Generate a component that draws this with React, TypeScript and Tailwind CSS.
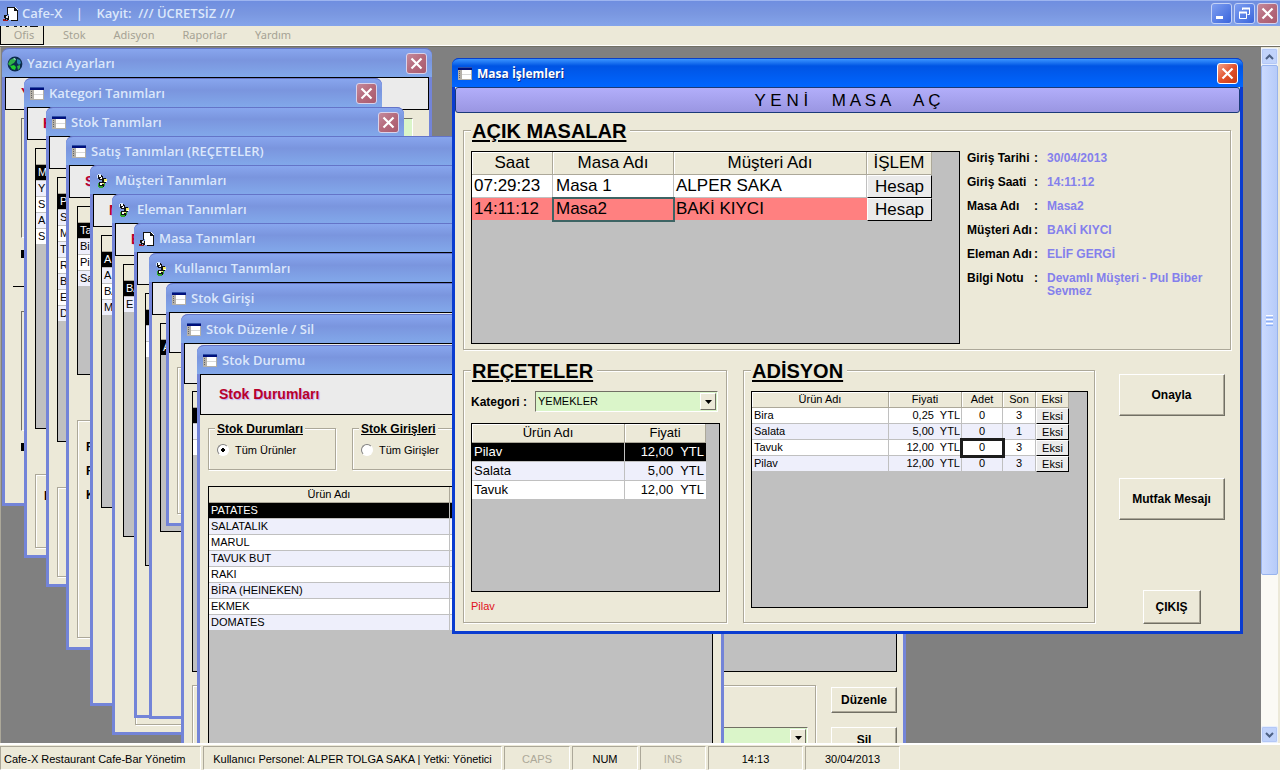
import React, { useState } from "react";

type IconKind = "form" | "people" | "page" | "globe";

function TitleIcon({ kind }: { kind: IconKind }) {
  if (kind === "form") {
    return (
      <svg viewBox="0 0 16 16" className="size-4 shrink-0" shapeRendering="crispEdges" aria-hidden="true">
        <rect x="1" y="1" width="14" height="1" fill="#3050a8" />
        <rect x="1" y="2" width="14" height="2" fill="#00107c" />
        <rect x="1" y="4" width="14" height="10" fill="#b4b0a8" />
        <rect x="5" y="4" width="9" height="4" fill="#fff" />
        <rect x="5" y="8" width="9" height="1" fill="#d8d8d8" />
        <rect x="5" y="9" width="9" height="4" fill="#fff" />
        <rect x="2" y="5" width="1" height="1" fill="#666" />
        <rect x="2" y="7" width="1" height="1" fill="#666" />
        <rect x="2" y="9" width="1" height="1" fill="#666" />
        <rect x="2" y="11" width="1" height="1" fill="#666" />
      </svg>
    );
  }
  if (kind === "people") {
    return (
      <svg viewBox="0 0 16 16" className="size-4 shrink-0" shapeRendering="crispEdges" aria-hidden="true">
        <path d="M3 2h4v1h1v3H7v1H4V6H3z" fill="#111" />
        <path d="M4 2h2v2H4zM6 4h1v2H5V5h1z" fill="#fff" />
        <path d="M3 1h3v1H3zM2 2h1v3H2z" fill="#cfe4ff" />
        <path d="M8 5h3v1h1v3h-1v1H8V9H7V6h1z" fill="#111" />
        <path d="M9 6h3v3H9z" fill="#f4ee6a" />
        <path d="M10 8h2v1h-2z" fill="#fff" />
        <path d="M4 9h5v5H4z" fill="#111" />
        <path d="M3 10h1v4H3zM9 10h1v3H9zM4 13h4v2H4z" fill="#2fa42f" />
        <path d="M5 10h2v2H5z" fill="#fff" />
        <path d="M7 10h2v1H7z" fill="#f4ee6a" />
      </svg>
    );
  }
  if (kind === "page") {
    return (
      <svg viewBox="0 0 16 16" className="size-4 shrink-0" shapeRendering="crispEdges" aria-hidden="true">
        <path d="M5 1h7l3 3v10H6z" fill="#fff" />
        <path d="M4 1h7v1H5v7H4zM11 1h1v1h1v1h1v1h1v11H8v-1h6V5h-3z" fill="#111" />
        <path d="M1 9h3v1h2v4H5v1H4v-2H3v2H1v-1h1v-2H1z" fill="#111" />
        <path d="M3 10h2v2H3z" fill="#e8e8e8" />
        <path d="M0 13h2v1h3v1H0z" fill="#a01818" />
      </svg>
    );
  }
  return (
    <svg viewBox="0 0 16 16" className="size-4 shrink-0" aria-hidden="true">
      <circle cx="8" cy="8" r="7.4" fill="#0c2c4c" />
      <path d="M3 4l4-2 2 2-2 3-2 1-2 2-2-2z" fill="#2fb04a" />
      <path d="M3 10l4-1 2 2-1 3-3-1z" fill="#1ed02c" />
      <path d="M10 3l3 1 1 3-2 2-2-2z" fill="#2a80a8" />
      <path d="M10 10l3-1 0 3-2 2z" fill="#2fb04a" />
      <path d="M6 3l2-1 1 2z" fill="#bde0ee" />
    </svg>
  );
}

function CloseButton({ active }: { active?: boolean }) {
  return (
    <button
      type="button"
      aria-label="Kapat"
      className={
        active
          ? "flex size-[21px] shrink-0 items-center justify-center rounded-[3px] border border-white bg-linear-to-br from-[#f0a088] via-[#e2512b] to-[#c93a12]"
          : "flex size-[21px] shrink-0 items-center justify-center rounded-[3px] border border-[#d9d2ea] bg-linear-to-br from-[#c48a9c] via-[#b56a7c] to-[#a95a6e]"
      }
    >
      <svg viewBox="0 0 13 13" className="size-[13px]" aria-hidden="true">
        <path d="M1.5 1.5l10 10M11.5 1.5l-10 10" stroke="#fff" strokeWidth="2.2" />
      </svg>
    </button>
  );
}

function BackWindow({
  title,
  icon,
  place,
  strip = "",
  stripSize = "h-[33px] pl-[15px]",
  closable,
  children,
}: {
  title: string;
  icon: IconKind;
  place: string;
  strip?: string;
  stripSize?: string;
  closable?: boolean;
  children?: React.ReactNode;
}) {
  return (
    <section className={`absolute flex flex-col rounded-t-[7px] bg-[#7384d8] ${place}`}>
      <header className="flex h-[29px] shrink-0 items-center gap-1 rounded-t-[7px] border-t border-[#6474c8] bg-linear-to-b from-[#88a6ee] via-[#7a95de] via-40% to-[#82a8ea] pt-px pr-[5px] pl-[5px]">
        <TitleIcon kind={icon} />
        <h2 className="flex-1 truncate pt-px font-['Open_Sans',sans-serif] text-[13px] font-semibold text-[#dbe7fb]">{title}</h2>
        {closable && <CloseButton />}
      </header>
      <div className="mx-[3px] mb-[3px] flex min-h-0 flex-1 flex-col overflow-hidden bg-[#ece9d8]">
        <div className={`flex shrink-0 items-center border border-black bg-[#ebebeb] text-[14px] font-bold text-[#b8002a] ${stripSize}`}>
          <span className="[text-shadow:1px_1px_1px_#b9a8f0]">{strip}</span>
        </div>
        {children}
      </div>
    </section>
  );
}

function MiniGrid({ rows, height }: { rows: string[]; height: string }) {
  return (
    <div className={`shrink-0 overflow-hidden border border-black bg-[#c0c0c0] ${height}`}>
      <table className="w-full border-separate border-spacing-0 text-[11px] leading-[15px]">
        <thead>
          <tr>
            <th className="h-4 border-b border-[#aca899] bg-[#ece9d8] p-0" />
          </tr>
        </thead>
        <tbody>
          {rows.map((r, i) => (
            <tr key={i} className={i === 0 ? "bg-black text-white" : i % 2 ? "bg-[#eeeffb]" : "bg-white"}>
              <td className="h-4 border-b border-[#c0c0c0] p-0 pl-[2px]">{r}</td>
            </tr>
          ))}
        </tbody>
      </table>
    </div>
  );
}

const etched = "border border-[#aca899] shadow-[1px_1px_0_#fff,inset_1px_1px_0_#fff]";

function Group({ title, big, className, children }: { title: string; big?: boolean; className: string; children: React.ReactNode }) {
  return (
    <section className={`${etched} ${className}`}>
      <h3
        className={
          big
            ? "-mt-[11px] w-fit bg-[#ece9d8] pr-1 pl-px text-[20px] leading-[22px] font-bold underline decoration-2 underline-offset-2"
            : "-mt-2 w-fit bg-[#ece9d8] px-[2px] text-[12px] leading-4 font-bold underline"
        }
      >
        {title}
      </h3>
      {children}
    </section>
  );
}

const raised =
  "border border-t-white border-l-white border-r-[#716f64] border-b-[#716f64] bg-[#ece9d8] shadow-[inset_-1px_-1px_0_#aca899] text-[12px] font-bold";

function Combo({ id, value, options, className }: { id: string; value: string; options: string[]; className: string }) {
  const [v, setV] = useState(value);
  return (
    <div className={`relative h-[21px] border border-t-[#716f64] border-l-[#716f64] border-r-white border-b-white bg-[#daf5c9] ${className}`}>
      <select
        id={id}
        aria-label={options.length ? undefined : "Kategori"}
        value={v}
        onChange={(e) => setV(e.target.value)}
        className="block h-full w-full appearance-none bg-transparent pr-5 pl-[2px] text-[11px] outline-none"
      >
        {options.map((o) => (
          <option key={o}>{o}</option>
        ))}
      </select>
      <span className="pointer-events-none absolute top-px right-px flex h-[17px] w-4 items-center justify-center border border-t-white border-l-white border-r-[#716f64] border-b-[#716f64] bg-[#ece9d8]">
        <svg viewBox="0 0 7 4" className="h-1 w-[7px]" aria-hidden="true">
          <path d="M0 0h7L3.500 4z" fill="#000" />
        </svg>
      </span>
    </div>
  );
}

const stock = ["PATATES", "SALATALIK", "MARUL", "TAVUK BUT", "RAKI", "BİRA (HEINEKEN)", "EKMEK", "DOMATES"];

function StockStatus() {
  return (
    <div className="flex min-h-0 flex-1 flex-col px-2 pt-[13px]">
      <div className="flex gap-4">
        <Group title="Stok Durumları" className="h-[42px] w-[128px] px-[6px]">
          <label className="mt-[5px] flex items-center gap-[6px] pl-[2px] text-[11px] leading-4">
            <input type="radio" name="durum" defaultChecked className="size-3 appearance-none rounded-full border border-[#808080] border-r-white border-b-white bg-white bg-radial from-black from-25% to-white to-30%" />
            Tüm Ürünler
          </label>
        </Group>
        <Group title="Stok Girişleri" className="h-[42px] w-[128px] px-[6px]">
          <label className="mt-[5px] flex items-center gap-[6px] pl-[2px] text-[11px] leading-4">
            <input type="radio" name="giris" className="size-3 appearance-none rounded-full border border-[#808080] border-r-white border-b-white bg-white" />
            Tüm Girişler
          </label>
        </Group>
      </div>
      <div className="mt-4 min-h-0 flex-1 overflow-hidden border border-black bg-[#c0c0c0]">
        <table className="w-[420px] table-fixed border-separate border-spacing-0 text-[11px] leading-[15px]">
          <colgroup>
            <col className="w-[241px]" />
            <col />
          </colgroup>
          <thead>
            <tr className="bg-[#ece9d8]">
              <th className="h-4 border-r border-b border-[#aca899] p-0 font-normal">Ürün Adı</th>
              <th className="border-b border-[#aca899] p-0" />
            </tr>
          </thead>
          <tbody>
            {stock.map((s, i) => (
              <tr key={s} className={i === 0 ? "bg-black text-white" : i % 2 ? "bg-[#eeeffb]" : "bg-white"}>
                <td className="h-4 border-r border-b border-[#c0c0c0] p-0 pl-[2px]">{s}</td>
                <td className="border-b border-[#c0c0c0] p-0" />
              </tr>
            ))}
          </tbody>
        </table>
      </div>
    </div>
  );
}

const head = "border-r border-b border-[#aca899] bg-[#ece9d8] p-0 font-normal shadow-[inset_1px_1px_0_#fff]";
const cell = "border-r border-b border-[#c0c0c0] p-0";
const gridButton = "block w-full border border-t-white border-l-white border-r-black border-b-black bg-[#ebebeb] p-0";

function OpenTables() {
  const rows = [
    { saat: "07:29:23", masa: "Masa 1", musteri: "ALPER SAKA" },
    { saat: "14:11:12", masa: "Masa2", musteri: "BAKİ KIYCI" },
  ];
  return (
    <div className="h-[193px] w-[489px] shrink-0 border border-black bg-[#c0c0c0]">
      <table className="w-[460px] table-fixed border-separate border-spacing-0 text-[17px] leading-[22px]">
        <colgroup>
          <col className="w-[81px]" />
          <col className="w-[121px]" />
          <col className="w-[193px]" />
          <col className="w-[65px]" />
        </colgroup>
        <thead>
          <tr>
            <th className={`h-[23px] ${head}`}>Saat</th>
            <th className={head}>Masa Adı</th>
            <th className={head}>Müşteri Adı</th>
            <th className={head}>İŞLEM</th>
          </tr>
        </thead>
        <tbody>
          {rows.map((r, i) => (
            <tr key={r.saat} className={i ? "bg-[#ff8080]" : "bg-white"}>
              <td className={`h-[23px] pl-[2px]! ${i ? "border-b border-[#c0c0c0] p-0" : cell}`}>{r.saat}</td>
              <td className={`pl-[3px]! ${i ? "border-b border-[#c0c0c0] p-0 outline-2 -outline-offset-1 outline-[#3d6464]" : cell}`}>{r.masa}</td>
              <td className={`pl-[2px]! ${i ? "border-b border-[#c0c0c0] p-0" : cell}`}>{r.musteri}</td>
              <td className="p-0">
                <button type="button" className={`h-[23px] leading-[20px] ${gridButton}`}>
                  Hesap
                </button>
              </td>
            </tr>
          ))}
        </tbody>
      </table>
    </div>
  );
}

function Details() {
  const rows = [
    ["Giriş Tarihi", "30/04/2013"],
    ["Giriş Saati", "14:11:12"],
    ["Masa Adı", "Masa2"],
    ["Müşteri Adı", "BAKİ KIYCI"],
    ["Eleman Adı", "ELİF GERGİ"],
    ["Bilgi Notu", "Devamlı Müşteri - Pul Biber Sevmez"],
  ];
  return (
    <dl className="flex flex-1 flex-col gap-[11px] pt-px text-[12px] leading-[13px] font-bold">
      {rows.map(([k, v]) => (
        <div key={k} className="flex">
          <dt className="flex w-20 shrink-0 justify-between pr-[9px]">
            <span className="whitespace-nowrap">{k}</span>
            <span>:</span>
          </dt>
          <dd className="max-w-[170px] text-[#8480ec]">{v}</dd>
        </div>
      ))}
    </dl>
  );
}

function Recipes() {
  const rows = [
    ["Pilav", "12,00  YTL"],
    ["Salata", "5,00  YTL"],
    ["Tavuk", "12,00  YTL"],
  ];
  return (
    <Group big title="REÇETELER" className="h-[253px] w-[264px] pr-[6px] pl-[7px]">
      <div className="mt-[9px] flex items-center">
        <label htmlFor="kategori" className="w-16 text-[12px] font-bold whitespace-nowrap">
          Kategori :
        </label>
        <Combo id="kategori" value="YEMEKLER" options={["YEMEKLER"]} className="w-[183px]" />
      </div>
      <div className="mt-[11px] h-[169px] border border-black bg-[#c0c0c0]">
        <table className="w-[234px] table-fixed border-separate border-spacing-0 text-[13px] leading-[18px]">
          <colgroup>
            <col className="w-[153px]" />
            <col className="w-[81px]" />
          </colgroup>
          <thead>
            <tr>
              <th className={`h-[19px] ${head}`}>Ürün Adı</th>
              <th className={head}>Fiyati</th>
            </tr>
          </thead>
          <tbody>
            {rows.map(([n, p], i) => (
              <tr key={n} className={i === 0 ? "bg-black text-white" : i % 2 ? "bg-[#eeeffb]" : "bg-white"}>
                <td className={`h-[19px] pl-[2px]! ${cell}`}>{n}</td>
                <td className="border-b border-[#c0c0c0] p-0 pr-[2px] text-right whitespace-pre">{p}</td>
              </tr>
            ))}
          </tbody>
        </table>
      </div>
      <p className="mt-[6px] text-[11px] leading-4 text-[#e01020]">Pilav</p>
    </Group>
  );
}

function Bill() {
  const rows = [
    ["Bira", "0,25  YTL", "0", "3"],
    ["Salata", "5,00  YTL", "0", "1"],
    ["Tavuk", "12,00  YTL", "0", "3"],
    ["Pilav", "12,00  YTL", "0", "3"],
  ];
  return (
    <Group big title="ADİSYON" className="h-[253px] w-[352px] pr-[6px] pl-[7px]">
      <div className="mt-[9px] h-[217px] border border-black bg-[#c0c0c0]">
        <table className="w-[317px] table-fixed border-separate border-spacing-0 text-[11px] leading-[15px]">
          <colgroup>
            <col className="w-[137px]" />
            <col className="w-[73px]" />
            <col className="w-[41px]" />
            <col className="w-[33px]" />
            <col className="w-[33px]" />
          </colgroup>
          <thead>
            <tr>
              <th className={`h-4 ${head}`}>Ürün Adı</th>
              <th className={head}>Fiyati</th>
              <th className={head}>Adet</th>
              <th className={head}>Son</th>
              <th className={head}>Eksi</th>
            </tr>
          </thead>
          <tbody>
            {rows.map(([n, p, a, s], i) => (
              <tr key={n} className={i % 2 ? "bg-[#eeeffb]" : "bg-white"}>
                <td className={`h-4 pl-[2px]! ${cell}`}>{n}</td>
                <td className={`pr-px! text-right whitespace-pre ${cell}`}>{p}</td>
                <td className={`text-center ${cell} ${i === 2 ? "outline-3 -outline-offset-1 outline-[#1c1c1c]" : ""}`}>{a}</td>
                <td className={`text-center ${cell}`}>{s}</td>
                <td className="p-0">
                  <button type="button" className={`h-4 leading-[14px] ${gridButton}`}>
                    Eksi
                  </button>
                </td>
              </tr>
            ))}
          </tbody>
        </table>
      </div>
    </Group>
  );
}

function TableWindow() {
  return (
    <section className="absolute top-[12px] left-[452px] flex h-[576px] w-[791px] flex-col rounded-t-[7px] bg-[#0a3cd0]">
      <header className="flex h-[29px] shrink-0 items-center gap-1 rounded-t-[7px] border-t border-[#0a40c8] bg-linear-to-b from-[#3a94ff] via-[#0054e4] via-25% to-[#0066ff] pt-px pr-[5px] pl-[5px]">
        <TitleIcon kind="form" />
        <h2 className="flex-1 pt-px font-['Open_Sans',sans-serif] text-[12px] font-bold text-white [text-shadow:1px_1px_0_#0b2f90]">Masa İşlemleri</h2>
        <CloseButton active />
      </header>
      <div className="mx-[3px] mb-[3px] flex min-h-0 flex-1 flex-col bg-[#ece9d8]">
        <button
          type="button"
          className="h-[26px] shrink-0 rounded-[3px] border border-[#1a3a78] bg-linear-to-b from-[#b2aefa] to-[#9a96e2] pt-px text-[17px] leading-6 whitespace-pre"
        >
          {"Y E N İ     M A S A     A Ç"}
        </button>
        <div className="flex flex-1 flex-col pt-[17px] pr-[9px] pl-2">
          <Group big title="AÇIK MASALAR" className="h-[220px] px-[7px]">
            <div className="mt-[9px] flex gap-[7px]">
              <OpenTables />
              <Details />
            </div>
          </Group>
          <div className="mt-5 flex gap-4">
            <Recipes />
            <Bill />
            <div className="flex flex-1 flex-col items-center pt-1 pl-px">
              <button type="button" className={`h-[42px] w-[106px] ${raised}`}>
                Onayla
              </button>
              <button type="button" className={`mt-[62px] h-[42px] w-[106px] ${raised}`}>
                Mutfak Mesajı
              </button>
              <button type="button" className={`mt-[70px] h-[34px] w-[58px] ${raised}`}>
                ÇIKIŞ
              </button>
            </div>
          </div>
        </div>
      </div>
    </section>
  );
}

const captionButton =
  "flex size-[21px] items-center justify-center rounded-[3px] border border-[#c4d2f6] bg-linear-to-br from-[#7f9ef0] to-[#3a64dc]";

function Scrollbar() {
  const btn = "flex h-[17px] w-full items-center justify-center rounded-[2px] border border-[#e8effd] bg-[#c1d3fb] shadow-[inset_0_0_0_1px_#b4c8f6]";
  return (
    <div className="mt-px mr-[2px] flex w-[17px] shrink-0 flex-col bg-[#fbfaf5]">
      <button type="button" aria-label="Yukarı" className={btn}>
        <svg viewBox="0 0 9 6" className="h-[6px] w-[9px]" aria-hidden="true">
          <path d="M1 5l3.500-3.500L8 5" fill="none" stroke="#4d6185" strokeWidth="2" />
        </svg>
      </button>
      <div className="flex h-[510px] shrink-0 flex-col items-center justify-center gap-px rounded-[2px] border border-[#98b4ee] bg-linear-to-r from-[#cbdafe] to-[#b6cbf9]">
        <i className="h-px w-[7px] bg-white" />
        <i className="h-px w-[7px] bg-[#8cb0f8]" />
        <i className="h-px w-[7px] bg-white" />
        <i className="h-px w-[7px] bg-[#8cb0f8]" />
        <i className="h-px w-[7px] bg-white" />
        <i className="h-px w-[7px] bg-[#8cb0f8]" />
      </div>
      <div className="min-h-0 flex-1" />
      <button type="button" aria-label="Aşağı" className={btn}>
        <svg viewBox="0 0 9 6" className="h-[6px] w-[9px]" aria-hidden="true">
          <path d="M1 1l3.500 3.500L8 1" fill="none" stroke="#4d6185" strokeWidth="2" />
        </svg>
      </button>
    </div>
  );
}

export default function App() {
  const pane = "border border-t-[#aca899] border-l-[#aca899] border-r-white border-b-white pt-1 text-center whitespace-nowrap";
  return (
    <main className="flex h-screen flex-col overflow-hidden bg-[#ece9d8] font-['Liberation_Sans',Arial,sans-serif] text-[11px] text-black">
      <header className="flex h-[26px] shrink-0 items-center gap-[3px] border-t border-[#9db5f0] bg-linear-to-b from-[#6f8ee0] via-[#7a97e0] to-[#84a4ea] pr-[2px] pl-[3px]">
        <TitleIcon kind="page" />
        <h1 className="flex-1 font-['Open_Sans',sans-serif] text-[13px] font-semibold whitespace-pre text-[#dbe7fb]">
          {"Cafe-X    |    Kayit:  /// ÜCRETSİZ ///"}
        </h1>
        <div className="flex gap-[2px]">
          <button type="button" aria-label="Küçült" className={captionButton}>
            <svg viewBox="0 0 13 13" className="size-[13px]" aria-hidden="true">
              <path d="M1 9h7v3H1z" fill="#fff" />
            </svg>
          </button>
          <button type="button" aria-label="Geri yükle" className={captionButton}>
            <svg viewBox="0 0 13 13" className="size-[13px]" aria-hidden="true">
              <path d="M4.500 3V1.500h7v6H9.500" fill="none" stroke="#fff" />
              <path d="M4 1.500h8M1 5.500h8" stroke="#fff" strokeWidth="2" />
              <path d="M1.500 5.500h7v6h-7z" fill="none" stroke="#fff" />
            </svg>
          </button>
          <CloseButton />
        </div>
      </header>

      <nav className="relative flex h-5 shrink-0 border-b border-white font-['Noto_Sans',sans-serif] text-[11px] text-[#a5a294]">
        <button type="button" className="w-11 border border-t-0 border-black pl-1">
          Ofis
        </button>
        <button type="button" className="ml-1 px-[15px]">
          Stok
        </button>
        <button type="button" className="px-[13px]">
          Adisyon
        </button>
        <button type="button" className="px-[15px]">
          Raporlar
        </button>
        <button type="button" className="px-[13px]">
          Yardım
        </button>
        <svg viewBox="0 0 36 2" className="absolute top-0 left-1 h-[2px] w-9" aria-hidden="true">
          <path d="M2 0h3v1H2zM10 0h3v1h-3zM16 0h2v1h-2zM21 0h2v1h-2zM26 0h8v1h-8z" fill="#111" />
        </svg>
      </nav>

      <div className="flex min-h-0 flex-1 border-t border-[#716f64] bg-[#ece9d8]">
        <div className="relative min-w-0 flex-1 overflow-hidden border-l border-[#aca899] bg-[#808080]">
          <div className="absolute inset-0 -left-px -top-px">
            <BackWindow title="Yazıcı Ayarları" icon="globe" place="left-[2px] top-[2px] h-[458px] w-[430px]" strip="Y" closable>
              <div className="flex flex-col pt-2 pr-4 pl-4">
                <div className="h-[120px] border border-[#716f64] border-r-white border-b-white bg-linear-to-r from-[#ece9d8] from-50% to-[#daf5c9] to-50%" />
                <div className="mt-3 h-2 w-2 bg-black" />
                <div className="mt-7 -ml-2 h-px bg-black" />
                <div className="mt-6 h-[120px] border border-[#716f64] border-r-white border-b-white" />
                <div className="mt-3 h-2 w-2 bg-black" />
              </div>
            </BackWindow>
            <BackWindow title="Kategori Tanımları" icon="form" place="left-[24px] top-[32px] h-[480px] w-[358px]" strip="K" closable>
              <div className="flex flex-col p-2">
                <MiniGrid rows={["M", "Y", "S", "A", "S"]} height="h-[281px]" />
                <div className={`mt-[45px] h-[74px] pt-3 pl-2 text-[12px] font-bold ${etched}`}>K</div>
              </div>
            </BackWindow>
            <BackWindow title="Stok Tanımları" icon="form" place="left-[46px] top-[61px] h-[480px] w-[358px]" closable>
              <div className="flex flex-col p-2">
                <MiniGrid rows={["P", "S", "M", "T", "R", "B", "E", "D"]} height="h-[265px]" />
                <div className={`mt-[45px] h-[90px] ${etched}`} />
              </div>
            </BackWindow>
            <BackWindow title="Satış Tanımları (REÇETELER)" icon="form" place="left-[66px] top-[90px] h-[514px] w-[600px]" strip="S">
              <div className="flex flex-col p-2">
                <MiniGrid rows={["Ta", "Bi", "Pi", "Sa"]} height="h-[169px]" />
                <div className={`mt-[45px] flex h-[218px] flex-col gap-2 pt-[18px] pl-2 text-[12px] leading-4 font-bold ${etched}`}>
                  <span>F</span>
                  <span>F</span>
                  <span>K</span>
                </div>
              </div>
            </BackWindow>
            <BackWindow title="Müşteri Tanımları" icon="people" place="left-[90px] top-[119px] h-[541px] w-[600px]" strip="M">
              <div className="p-2">
                <MiniGrid rows={["A", "A", "BA", "M"]} height="h-[273px]" />
              </div>
            </BackWindow>
            <BackWindow title="Eleman Tanımları" icon="people" place="left-[112px] top-[148px] h-[541px] w-[600px]" strip="E">
              <div className="flex flex-col p-2">
                <MiniGrid rows={["BA", "E"]} height="h-[273px]" />
                <div className={`mt-[45px] ml-3 h-[143px] ${etched}`} />
              </div>
            </BackWindow>
            <BackWindow title="Masa Tanımları" icon="page" place="left-[134px] top-[177px] h-[495px] w-[560px]">
              <div className="p-2">
                <MiniGrid rows={["", "", ""]} height="h-[273px]" />
              </div>
            </BackWindow>
            <BackWindow title="Kullanıcı Tanımları" icon="people" place="left-[149px] top-[207px] h-[466px] w-[560px]">
              <div className="p-2">
                <MiniGrid rows={["A"]} height="h-[209px]" />
              </div>
            </BackWindow>
            <BackWindow title="Stok Girişi" icon="form" place="left-[166px] top-[237px] h-[243px] w-[540px]" stripSize="h-[41px] pl-[18px]">
              <div className="px-2 pt-[14px]">
                <div className={`h-[147px] ${etched}`} />
              </div>
            </BackWindow>
            <BackWindow title="Stok Düzenle / Sil" icon="form" place="left-[181px] top-[268px] h-[480px] w-[725px]" stripSize="h-[41px] pl-[18px]">
              <div className="flex flex-col pt-[7px] pr-[6px] pl-2">
                <MiniGrid rows={["", "", ""]} height="h-[281px]" />
                <div className="mt-[13px] flex gap-[15px]">
                  <div className={`flex h-[90px] flex-1 items-start justify-end pt-[41px] pr-[7px] ${etched}`}>
                    <Combo id="urun" value="" options={[]} className="w-[183px]" />
                  </div>
                  <div className="flex flex-col gap-[14px] pt-[2px]">
                    <button type="button" className={`h-[26px] w-[66px] ${raised}`}>
                      Düzenle
                    </button>
                    <button type="button" className={`h-[26px] w-[66px] ${raised}`}>
                      Sil
                    </button>
                  </div>
                </div>
              </div>
            </BackWindow>
            <BackWindow title="Stok Durumu" icon="form" place="left-[197px] top-[299px] h-[460px] w-[527px]" strip="Stok Durumları" stripSize="h-[41px] pl-[18px]">
              <StockStatus />
            </BackWindow>
            <TableWindow />
          </div>
        </div>
        <Scrollbar />
      </div>

      <footer className="flex h-[27px] shrink-0 gap-[2px] border-t-2 border-white pt-px">
        <div className={`w-[201px] pl-[3px] text-left! ${pane}`}>Cafe-X Restaurant Cafe-Bar Yönetim</div>
        <div className={`w-[299px] ${pane}`}>Kullanıcı Personel: ALPER TOLGA SAKA | Yetki: Yönetici</div>
        <div className={`w-[66px] text-[#aca899] ${pane}`}>CAPS</div>
        <div className={`w-[66px] ${pane}`}>NUM</div>
        <div className={`w-[66px] text-[#aca899] ${pane}`}>INS</div>
        <div className={`w-[95px] ${pane}`}>14:13</div>
        <div className={`w-[95px] ${pane}`}>30/04/2013</div>
      </footer>
    </main>
  );
}
